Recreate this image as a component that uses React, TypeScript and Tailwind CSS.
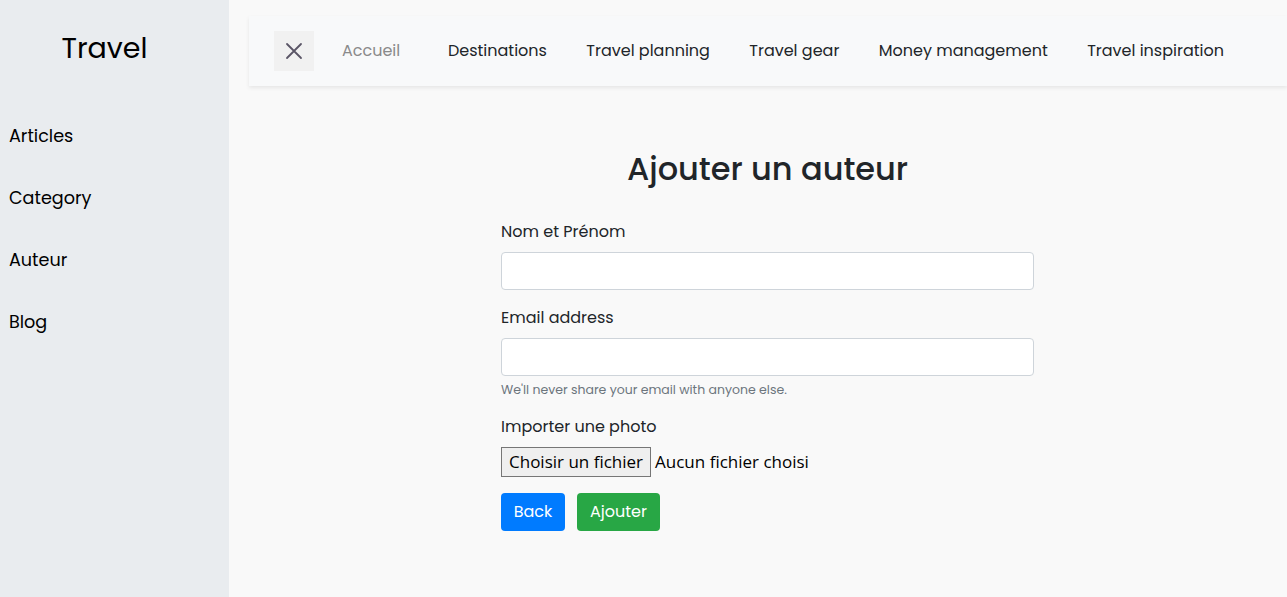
import React from "react";

const navItems = ["Destinations", "Travel planning", "Travel gear", "Money management", "Travel inspiration"];
const sideLinks = ["Articles", "Category", "Auteur", "Blog"];

const App: React.FC = () => {
  return (
    <div className="flex min-h-[597px] bg-[#f9f9f9] font-['Poppins','Open_Sans',sans-serif] text-[#212529]">
      {/* Sidebar */}
      <aside className="w-[229px] shrink-0 bg-[#e9ecef]">
        <h1 className="pt-[30px] pr-[20px] text-center text-[28.5px] leading-[36px] text-black">Travel</h1>
        <ul className="mt-[57px] flex flex-col gap-[36px] pl-[9px]">
          {sideLinks.map((l) => (
            <li key={l} className="text-[17.6px] leading-[26px] text-black">
              {l}
            </li>
          ))}
        </ul>
      </aside>

      {/* Main */}
      <main className="flex-1 pl-[19px]">
        <nav className="mt-[16px] ml-px flex h-[70px] items-center bg-[#f8f9fa] pl-[25px] shadow-[0_2px_4px_rgba(0,0,0,0.08)]">
          <button className="flex h-[40px] w-[40px] items-center justify-center bg-[#f1f1f1]">
            <svg width="20" height="20" viewBox="0 0 20 20" fill="none" stroke="#5a5566" strokeWidth="1.8" strokeLinecap="round">
              <path d="M3 3l14 14M17 3L3 17" />
            </svg>
          </button>
          <a className="ml-[28px] text-[16px] text-[#8a8a8a]">Accueil</a>
          <div className="ml-[28px] flex">
            {navItems.map((n) => (
              <a key={n} className="px-[19.7px] text-[16px] text-[#212529]">
                {n}
              </a>
            ))}
          </div>
        </nav>

        <div className="mx-auto mt-[63px] w-[533px]">
          <h2 className="text-center text-[32px] leading-[40px] font-medium">Ajouter un auteur</h2>
          <form className="mt-[31px]">
            <div className="mb-4">
              <label className="mb-2 block text-[16px] leading-[24px]">Nom et Prénom</label>
              <input type="text" className="block h-[38px] w-full rounded-[4px] border border-[#ced4da] bg-white px-3" />
            </div>
            <div className="mb-4">
              <label className="mb-2 block text-[16px] leading-[24px]">Email address</label>
              <input type="email" className="block h-[38px] w-full rounded-[4px] border border-[#ced4da] bg-white px-3" />
              <small className="mt-1 block text-[12.5px] leading-[19px] text-[#6c757d]">
                We'll never share your email with anyone else.
              </small>
            </div>
            <div className="mb-4">
              <label className="mb-2 block text-[16px] leading-[24px]">Importer une photo</label>
              <div className="flex items-center font-['Open_Sans',sans-serif] text-[17px]">
                <span className="border border-[#767676] bg-[#efefef] px-[7px] py-[1px] leading-[26px] text-black">
                  Choisir un fichier
                </span>
                <span className="ml-[4px] text-black">Aucun fichier choisi</span>
              </div>
            </div>
            <div className="flex gap-3">
              <button type="button" className="h-[38px] w-[64px] rounded-[4px] bg-[#007bff] text-[16px] text-white">
                Back
              </button>
              <button type="submit" className="h-[38px] w-[83px] rounded-[4px] bg-[#28a745] text-[16px] text-white">
                Ajouter
              </button>
            </div>
          </form>
        </div>
      </main>
    </div>
  );
};

export default App;
